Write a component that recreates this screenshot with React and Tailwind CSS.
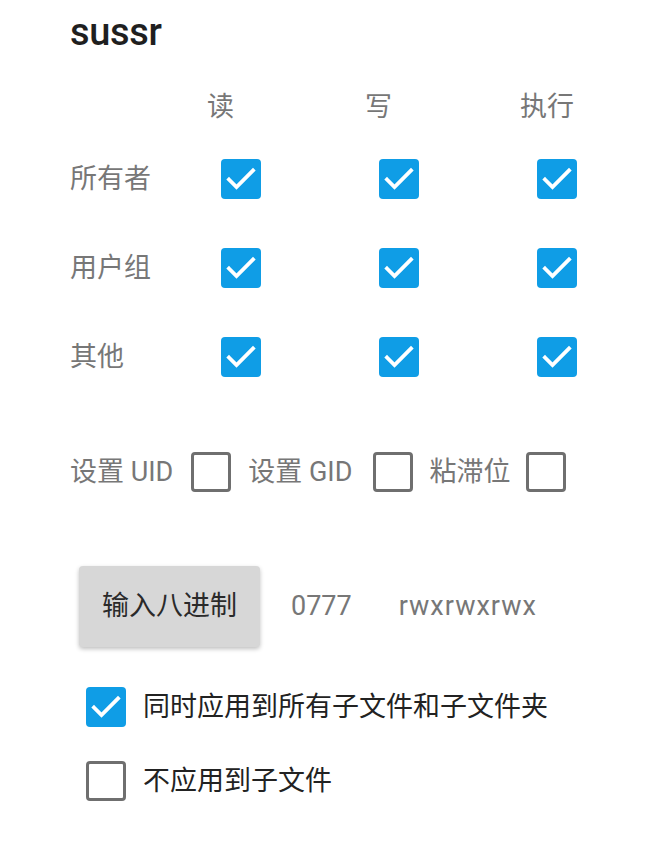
import React, { useState } from 'react';

const FONT = { fontFamily: 'Roboto, "Noto Sans CJK SC", sans-serif' };

const Box = ({ checked, onClick }) => (
  <button
    onClick={onClick}
    className={`w-[40px] h-[40px] rounded-[4px] flex items-center justify-center shrink-0 ${
      checked ? 'bg-[#0f9de6]' : 'border-[3px] border-[#6f6f6f] bg-white'
    }`}
  >
    {checked && (
      <svg width="40" height="40" viewBox="0 0 40 40" fill="none">
        <path d="M8 20.5 L15.5 28 L32 11.5" stroke="white" strokeWidth="3.8" strokeLinecap="square" />
      </svg>
    )}
  </button>
);

const rows = ['所有者', '用户组', '其他'];

const App = () => {
  const [perm, setPerm] = useState(Array(9).fill(true));
  const [special, setSpecial] = useState([false, false, false]);
  const [recursive, setRecursive] = useState(true);
  const [filesOnly, setFilesOnly] = useState(false);

  const toggle = (i) => setPerm(perm.map((v, j) => (j === i ? !v : v)));

  return (
    <div className="w-[654px] h-[860px] bg-white pl-[70px] pt-[10px]" style={FONT}>
      {/* Title */}
      <h1 className="text-[38px] font-medium text-[#1f1f1f] leading-[44px] tracking-[-0.3px]">sussr</h1>

      {/* Header */}
      <div className="flex mt-[38px] h-[30px] items-center text-[27px] text-[#777] leading-none">
        <span className="w-[137px] shrink-0" />
        <span className="w-[158px] shrink-0">读</span>
        <span className="w-[155px] shrink-0">写</span>
        <span>执行</span>
      </div>

      {/* Permission grid */}
      <div className="mt-[37px] flex flex-col gap-[49px]">
        {rows.map((label, r) => (
          <div key={label} className="flex items-center h-[40px]">
            <span className="w-[151px] shrink-0 text-[27px] text-[#777]">{label}</span>
            {[0, 1, 2].map((c) => (
              <div key={c} className="w-[158px] shrink-0 last:w-[40px]">
                <Box checked={perm[r * 3 + c]} onClick={() => toggle(r * 3 + c)} />
              </div>
            ))}
          </div>
        ))}
      </div>

      {/* Special bits */}
      <div className="mt-[75px] flex items-center h-[40px] text-[27px] text-[#777]">
        <span>设置 UID</span>
        <div className="ml-[18px]">
          <Box checked={special[0]} onClick={() => setSpecial([!special[0], special[1], special[2]])} />
        </div>
        <span className="ml-[17px]">设置 GID</span>
        <div className="ml-[21px]">
          <Box checked={special[1]} onClick={() => setSpecial([special[0], !special[1], special[2]])} />
        </div>
        <span className="ml-[16px]">粘滞位</span>
        <div className="ml-[16px]">
          <Box checked={special[2]} onClick={() => setSpecial([special[0], special[1], !special[2]])} />
        </div>
      </div>

      {/* Octal */}
      <div className="mt-[74px] flex items-center">
        <button className="ml-[9px] w-[181px] h-[81px] bg-[#d7d7d7] rounded-[4px] shadow-[0_2px_4px_rgba(0,0,0,0.25)] text-[27px] text-[#2a2a2a]">
          输入八进制
        </button>
        <span className="ml-[31px] text-[27px] text-[#777]">0777</span>
        <span className="ml-[47px] text-[27px] text-[#777] tracking-[1px]">rwxrwxrwx</span>
      </div>

      {/* Apply options */}
      <div className="mt-[40px] ml-[16px] flex flex-col gap-[33px]">
        <div className="flex items-center gap-[17px]">
          <Box checked={recursive} onClick={() => setRecursive(!recursive)} />
          <span className="text-[27px] text-[#222]">同时应用到所有子文件和子文件夹</span>
        </div>
        <div className="flex items-center gap-[17px]">
          <Box checked={filesOnly} onClick={() => setFilesOnly(!filesOnly)} />
          <span className="text-[27px] text-[#222]">不应用到子文件</span>
        </div>
      </div>
    </div>
  );
};

export default App;
